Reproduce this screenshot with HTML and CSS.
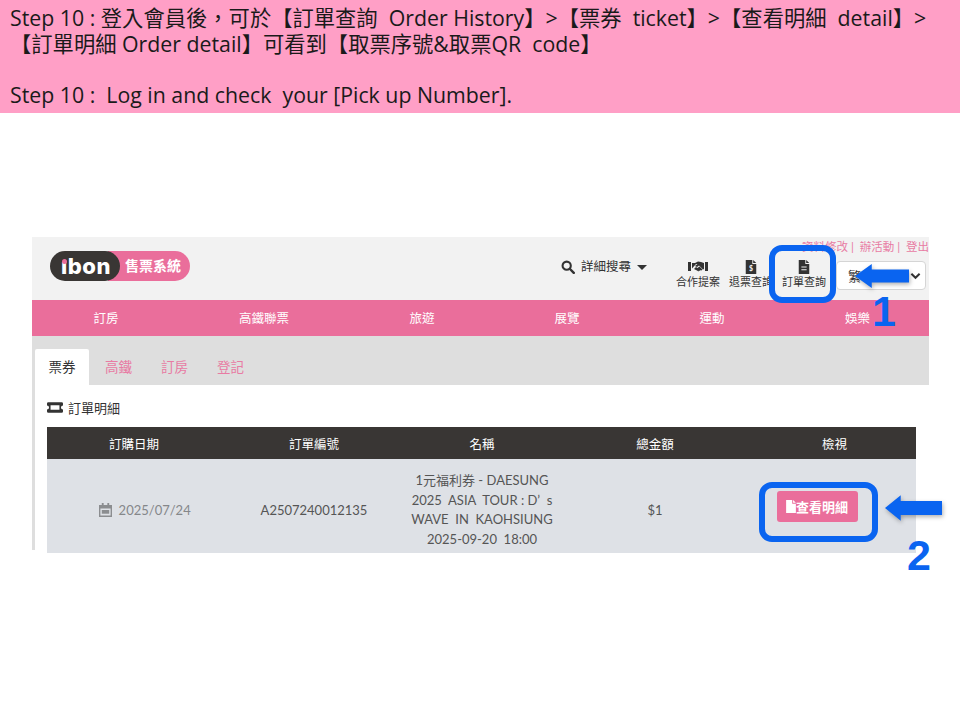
FILE: index.html
```html
<!DOCTYPE html>
<html lang="zh-Hant">
  <head>
    <title>Step 10</title>
    <link rel="stylesheet" href="styles.css">
  </head>
  <body>
    <div class="banner">
      <p>Step 10 : 登入會員後，可於【訂單查詢&nbsp; Order History】&gt;【票券&nbsp; ticket】&gt;【查看明細&nbsp; detail】&gt;<br>【訂單明細 Order detail】可看到【取票序號&amp;取票QR&nbsp; code】</p>
      <p class="en">Step 10 :&nbsp; Log in and check&nbsp; your [Pick up Number].</p>
    </div>

    <div class="shot">
      <div class="head">
        <div class="logo">
          <span class="logo-dark"><i class="logo-dot"></i>ıbon</span>
          <span class="logo-pink">售票系統</span>
        </div>
        <div class="head-right">
          <div class="top-links">資料修改 |&nbsp; 辦活動 |&nbsp; 登出</div>
          <div class="tools">
            <div class="search">
              <svg class="search-icon" viewBox="0 0 16 16"><circle cx="6.5" cy="6.5" r="4.7" fill="none" stroke="#333" stroke-width="2.4"/><path d="M10 10l4.600 4.600" stroke="#333" stroke-width="2.800" stroke-linecap="round"/></svg>
              <span>詳細搜尋</span>
              <i class="caret"></i>
            </div>
            <div class="tool">
              <svg viewBox="0 0 20 14"><path fill="#333" d="M0 2h3v9H0zM17 2h3v9h-3zM4 3h3l3-1.500 3 .5 3 1v6l-1 .5-4-4-2 1.500-2-1 2.500-2H8L4 8.500z"/><path fill="#333" d="M6 9l2-2 1.500 1 2-1.500 3 3-1 1-1-.5-.5 1-1-.5-.5 1-1.500-1z"/></svg>
              <span>合作提案</span>
            </div>
            <div class="tool">
              <svg viewBox="0 0 12 16"><path fill="#333" d="M0 0h7.500v4.500H12V16H0z"/><path fill="#333" d="M8.500 0L12 3.500H8.500z"/><text x="6" y="13" font-size="8" font-weight="700" text-anchor="middle" fill="#f2f2f2">$</text></svg>
              <span>退票查詢</span>
            </div>
            <div class="tool">
              <svg viewBox="0 0 12 16"><path fill="#333" d="M0 0h7.500v4.500H12V16H0z"/><path fill="#333" d="M8.500 0L12 3.500H8.500z"/><path fill="#f2f2f2" d="M3 7.500h6v1.200H3zM3 10.500h6v1.200H3z"/></svg>
              <span>訂單查詢</span>
            </div>
            <div class="lang">
              <span>繁</span>
              <svg viewBox="0 0 12 8"><path d="M1.500 1.500L6 6l4.500-4.500" fill="none" stroke="#333" stroke-width="2.200"/></svg>
            </div>
          </div>
        </div>
      </div>

      <div class="nav">
        <span>訂房</span>
        <span>高鐵聯票</span>
        <span>旅遊</span>
        <span>展覽</span>
        <span>運動</span>
        <span>娛樂</span>
      </div>

      <div class="tabs">
        <span class="tab active">票券</span>
        <span class="tab">高鐵</span>
        <span class="tab">訂房</span>
        <span class="tab">登記</span>
      </div>

      <div class="content">
        <h2 class="title">
          <svg viewBox="0 0 18 12"><path fill="#333" fill-rule="evenodd" d="M1.500 0h15A1.500 1.500 0 0 1 18 1.500v2.200a2.300 2.300 0 0 0 0 4.600v2.200a1.500 1.500 0 0 1-1.500 1.500h-15A1.500 1.500 0 0 1 0 10.500V8.300a2.300 2.300 0 0 0 0-4.600V1.500A1.500 1.500 0 0 1 1.500 0zM4 3.500v5h10v-5z"/></svg>
          訂單明細
        </h2>
        <table class="orders">
          <colgroup>
            <col class="c-date"><col class="c-no"><col class="c-name"><col class="c-total"><col class="c-view">
          </colgroup>
          <thead>
            <tr><th>訂購日期</th><th>訂單編號</th><th>名稱</th><th>總金額</th><th>檢視</th></tr>
          </thead>
          <tbody>
            <tr>
              <td class="date">
                <svg viewBox="0 0 14 15"><path fill="#8b8d90" fill-rule="evenodd" d="M3 0h2v2h4V0h2v2h3v13H0V2h3zM1.500 6v7.500h11V6z"/><path fill="#8b8d90" d="M3 7.500h8v4H3z"/></svg>
                2025/07/24
              </td>
              <td>A2507240012135</td>
              <td class="name">1元福利券 - DAESUNG<br>2025&nbsp; ASIA&nbsp; TOUR : D’&nbsp; s<br>WAVE&nbsp; IN&nbsp; KAOHSIUNG<br>2025-09-20&nbsp; 18:00</td>
              <td>$1</td>
              <td class="view">
                <span class="detail-btn">
                  <svg viewBox="0 0 12 16"><path fill="#fff" d="M0 0h7.500v4.500H12V16H0z"/><path fill="#fff" d="M8.500 0L12 3.500H8.500z"/></svg>查看明細
                </span>
              </td>
            </tr>
          </tbody>
        </table>
      </div>

      <!-- blue marks drawn over the screenshot -->
      <div class="mark mark-one"></div>
      <svg class="arrow arrow-one" viewBox="0 0 58 28"><path d="M0 14L18 1v6h40v14H18v6z"/></svg>
      <span class="num num-one">1</span>
      <div class="mark mark-two"></div>
      <svg class="arrow arrow-two" viewBox="0 0 58 28"><path d="M0 14L16 1v6h42v14H16v6z"/></svg>
      <span class="num num-two">2</span>
    </div>
  </body>
</html>
```

FILE: styles.css
```css
body {
  margin: 0;
  background: #fff;
  font-family: Lato, "Noto Sans CJK TC", sans-serif;
  color: #333;
}
p {
  margin: 0;
}
.banner {
  height: 113px;
  box-sizing: border-box;
  padding: 5px 10px 0;
  background: #ff9fc6;
  color: #1a1a1a;
  font-family: "Open Sans", "Noto Sans CJK TC", sans-serif;
  font-size: 21.300px;
  line-height: 25.500px;
}
.banner .en {
  margin-top: 25.500px;
}
.shot {
  position: relative;
  width: 897px;
  height: 340px;
  margin: 124px 0 0 32px;
}

/* header */
.head {
  display: flex;
  justify-content: space-between;
  height: 63px;
  background: #f2f2f2;
}
.logo {
  display: flex;
  align-items: center;
  height: 30px;
  margin: 14px 0 0 18px;
}
.logo-dark {
  position: relative;
  z-index: 1;
  width: 70px;
  height: 30px;
  box-sizing: border-box;
  padding-left: 11px;
  border-radius: 15px;
  background: #393634;
  color: #fff;
  font-family: Inter, sans-serif;
  font-size: 22px;
  font-weight: 800;
  letter-spacing: .5px;
  line-height: 30px;
}
.logo-dot {
  position: absolute;
  left: 12px;
  top: 8px;
  width: 5px;
  height: 5px;
  border-radius: 50%;
  background: #ea6e9b;
}
.logo-pink {
  width: 82px;
  height: 30px;
  box-sizing: border-box;
  margin-left: -12px;
  padding-left: 17px;
  border-radius: 0 15px 15px 0;
  background: #ea6e9b;
  color: #fff;
  font-size: 14px;
  font-weight: 700;
  line-height: 30px;
}
.head-right {
  display: flex;
  flex-direction: column;
  align-items: flex-end;
}
.top-links {
  height: 24px;
  color: #e87ba3;
  font-size: 11.500px;
  line-height: 19px;
}
.tools {
  display: flex;
  align-items: flex-start;
  padding-right: 3px;
}
.search {
  display: flex;
  align-items: center;
  gap: 6px;
  margin: -2px 29px 0 0;
  font-size: 12.500px;
  line-height: 16px;
}
.search-icon {
  width: 14px;
  height: 14px;
}
.caret {
  width: 0;
  height: 0;
  border: 5px solid transparent;
  border-top-color: #333;
  border-bottom: 0;
}
.tool {
  display: flex;
  flex-direction: column;
  align-items: center;
  width: 44px;
  margin: -1px 9px 0 0;
  font-size: 11px;
  line-height: 15px;
}
.tool svg {
  height: 14px;
  width: 20px;
}
.lang {
  display: flex;
  align-items: center;
  justify-content: space-between;
  width: 90px;
  height: 29px;
  box-sizing: border-box;
  margin-left: 1px;
  padding: 0 4px 0 11px;
  border: 1px solid #d5d5d5;
  border-radius: 4px;
  background: #fff;
  font-size: 13px;
}
.lang svg {
  width: 11px;
  height: 8px;
}

/* pink menu */
.nav {
  display: grid;
  grid-template-columns: 148px 168px 148px 142px 148px 143px;
  height: 36px;
  background: #ea6e9b;
  color: #fff;
  font-size: 12.500px;
  line-height: 37px;
  text-align: center;
}

/* tabs */
.tabs {
  display: flex;
  height: 36px;
  padding: 13px 0 0 3px;
  background: #dedede;
}
.tab {
  margin-left: 1px;
  padding: 0 14px;
  color: #e87ba3;
  font-size: 13.500px;
  line-height: 36px;
}
.tab.active {
  margin: 0 1px 0 0;
  padding: 0 13.500px;
  border-radius: 2px 2px 0 0;
  background: #fff;
  color: #333;
}

/* order table */
.content {
  padding-left: 15px;
  background: linear-gradient(#dedede, #dedede) left top / 3px 165px no-repeat;
}
.title {
  display: flex;
  align-items: center;
  gap: 5px;
  height: 42px;
  margin: 0;
  padding-top: 2px;
  box-sizing: border-box;
  font-size: 13px;
  font-weight: 400;
}
.title svg {
  width: 16px;
  height: 11px;
}
.orders {
  width: 869px;
  table-layout: fixed;
  border-collapse: collapse;
  text-align: center;
  font-size: 13px;
}
.c-date { width: 174px; }
.c-no { width: 186px; }
.c-name { width: 150px; }
.c-total { width: 196px; }
.c-view { width: 163px; }
.orders th {
  height: 32px;
  padding: 0;
  background: #393634;
  color: #fff;
  font-size: 12.500px;
  font-weight: 400;
}
.orders td {
  height: 86px;
  padding: 8px 0 0;
  background: #dee1e6;
  color: #555;
}
.orders .date {
  padding-left: 22px;
  color: #85878a;
}
.date svg {
  width: 13px;
  height: 14px;
  margin-right: 3px;
  vertical-align: -2px;
}
.orders .name {
  line-height: 19.500px;
}
.orders .view {
  padding: 0 35px 0 0;
  height: 94px;
}
.detail-btn {
  display: inline-flex;
  align-items: center;
  justify-content: center;
  width: 81px;
  height: 31px;
  border-radius: 3px;
  background: #ea6e9b;
  color: #fff;
  font-size: 13px;
  font-weight: 700;
}
.detail-btn svg {
  width: 10px;
  height: 13px;
}

/* annotations */
.mark {
  position: absolute;
  box-sizing: border-box;
  border: 6px solid #0a64f0;
  border-radius: 13px;
}
.mark-one {
  left: 737px;
  top: 8px;
  width: 67px;
  height: 58px;
}
.mark-two {
  left: 727px;
  top: 245px;
  width: 119px;
  height: 60px;
}
.arrow {
  position: absolute;
  height: 28px;
  fill: #0a64f0;
  filter: drop-shadow(1px 2px 2px rgba(0, 0, 0, .3));
}
.arrow-one {
  left: 823px;
  top: 25px;
  width: 54px;
}
.arrow-two {
  left: 853px;
  top: 257px;
  width: 57px;
}
.num {
  position: absolute;
  color: #0a64f0;
  font-family: "Liberation Sans", sans-serif;
  font-size: 43px;
  font-weight: 700;
  line-height: 43px;
}
.num-one {
  left: 840px;
  top: 53px;
}
.num-two {
  left: 875px;
  top: 297px;
}
```
